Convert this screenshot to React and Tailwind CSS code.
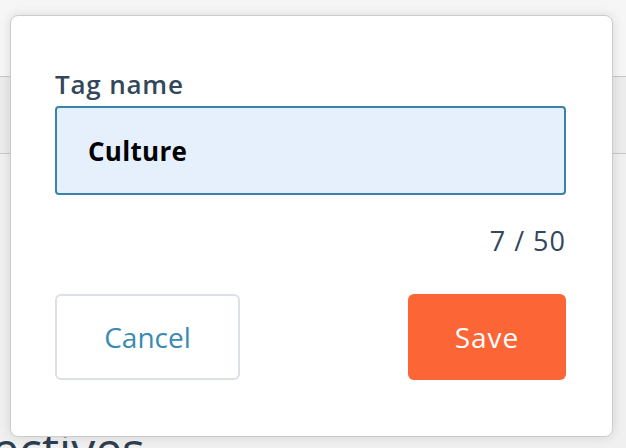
import React from "react";

export default function App() {
  return (
    <div className="relative w-[626px] h-[448px] overflow-hidden bg-[#f0f0f0]" style={{ fontFamily: "'Open Sans', 'Noto Sans', sans-serif" }}>
      <div className="flex flex-col">
        <div className="h-[77px] border-b border-[#c8c8c8] bg-[#f6f6f6]" />
        <div className="h-[77px] border-b border-[#c8c8c8] bg-[#ececec]" />
        <div className="h-[268px]" />
        <div className="-ml-[8px] text-[48px] leading-[54px] text-[#2d3e50]">ectives</div>
      </div>
      <div className="absolute left-[10px] top-[15px] w-[603px] h-[422px] bg-white border border-[#cccccc] rounded-[8px] shadow-[0_0_12px_rgba(0,0,0,0.12)] flex flex-col pl-[44px] pr-[46px] pt-[53px]">
        <label className="text-[26px] leading-[30px] font-semibold tracking-[0.8px] text-[#33475b] mb-[7px]">Tag name</label>
        <div className="h-[89px] rounded-[4px] border-2 border-[#3b82a8] bg-[#e6effc] flex items-center pl-[31px] pt-[1px]">
          <span className="text-[26px] font-bold tracking-[0.3px] text-black">Culture</span>
        </div>
        <div className="mt-[31px] text-right text-[27px] leading-[30px] tracking-[1px] text-[#33475b]">7 / 50</div>
        <div className="mt-[38px] flex justify-between">
          <button className="w-[185px] h-[86px] rounded-[6px] border-2 border-[#dbe1e6] bg-white text-[28px] text-[#3a8ab3]">Cancel</button>
          <button className="w-[158px] h-[86px] rounded-[6px] bg-[#fc6535] text-[28px] tracking-[1px] text-white">Save</button>
        </div>
      </div>
    </div>
  );
}
